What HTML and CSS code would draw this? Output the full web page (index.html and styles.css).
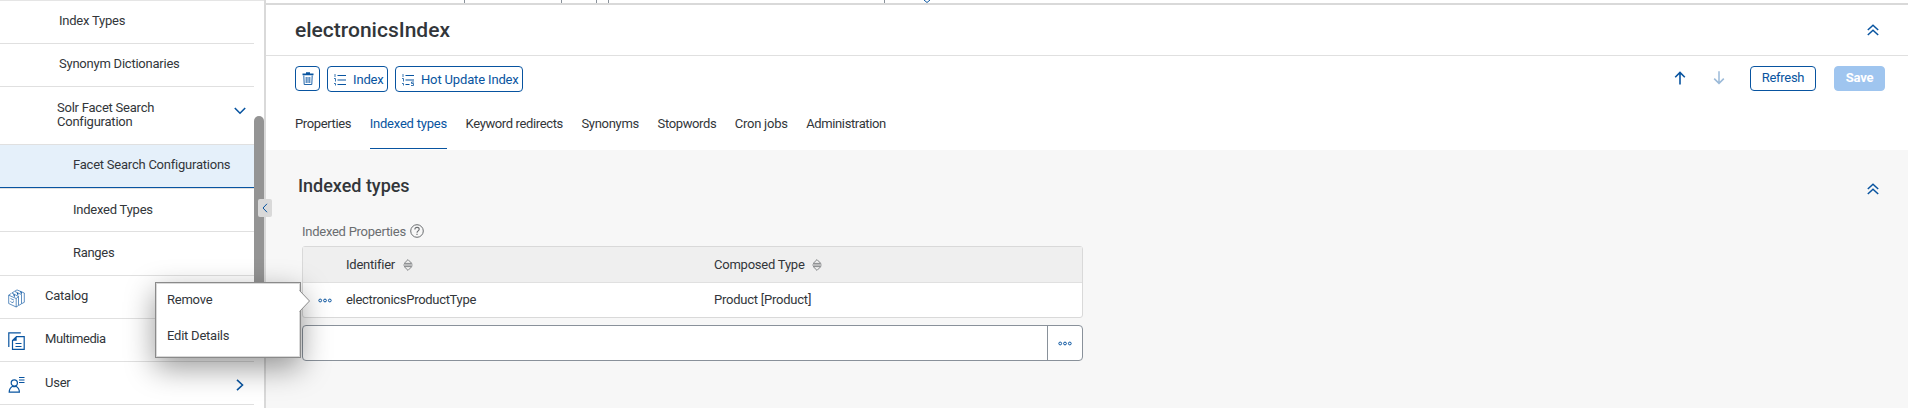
FILE: index.html
```html
<!DOCTYPE html>
<html lang="en">
<head>
<meta charset="utf-8">
<title>electronicsIndex</title>
<link rel="stylesheet" href="styles.css">
</head>
<body>
<svg class="defs" width="0" height="0">
  <symbol id="double-up" viewBox="0 0 12 12"><path d="M.8 6 6 1.2 11.2 6M.8 11 6 6.2 11.2 11" fill="none" stroke="currentColor" stroke-width="1.5"/></symbol>
  <symbol id="sort" viewBox="0 0 10 12"><path d="M1.200 4.400 5 .6 8.800 4.400ZM.300 6h9.400M1.200 7.600 5 11.400 8.800 7.600Z" fill="none" stroke="currentColor" stroke-width=".8"/></symbol>
  <symbol id="dots" viewBox="0 0 14 5"><g fill="none" stroke="currentColor" stroke-width="1"><circle cx="2.200" cy="2.500" r="1.400"/><circle cx="7" cy="2.500" r="1.400"/><circle cx="11.800" cy="2.500" r="1.400"/></g></symbol>
</svg>
<div class="app">
  <nav class="sidebar">
    <div class="nav-row sub"><span>Index Types</span></div>
    <div class="nav-row sub"><span>Synonym Dictionaries</span></div>
    <div class="nav-row group"><span>Solr Facet Search<br>Configuration</span>
      <svg class="chev-down" width="12" height="8" viewBox="0 0 12 8"><path d="M.8 1 6 6.2 11.2 1" fill="none" stroke="currentColor" stroke-width="1.6"/></svg></div>
    <div class="nav-row leaf selected"><span>Facet Search Configurations</span></div>
    <div class="nav-row leaf types"><span>Indexed Types</span></div>
    <div class="nav-row leaf ranges"><span>Ranges</span></div>
    <div class="nav-row top"><svg class="nav-icon" width="18" height="19" viewBox="0 0 18 19"><g fill="none" stroke="currentColor" stroke-width=".65"><path d="M.7 6.200 8.200 9.500V18L.7 14.500ZM.7 6.200 3.500 4.200M10.500 7.500 8.200 9.500M8.200 18l2.300-1.500V7.500L4 4 6.500 2.300 13.500 5.600V14.800L11 16.300M7 2.100 9 .9 16.300 4V13.300L13.800 14.600M2.500 9.500l3.500 1.600M2.500 12.200 4 13.800 6 12.500"/></g><path d="M5.200 5l1.600.8v2.500l-1.200-1.500ZM8.700 3.400l1.600.8v2.500L9.100 5.200ZM12.200 2.100l1.600.8v2.500l-1.200-1.500Z" fill="currentColor"/></svg><span>Catalog</span></div>
    <div class="nav-row top media"><svg class="nav-icon" width="18" height="19" viewBox="0 0 18 19"><path d="M.8 15V.8h12M8.500 4.600H16.200V17.400H4.500V8.600ZM7.500 11.500h6M7.500 14.500h6" fill="none" stroke="currentColor" stroke-width="1.200"/><path d="M4.500 8.800 8.700 4.600V8.800Z" fill="currentColor"/></svg><span>Multimedia</span></div>
    <div class="nav-row top user"><svg class="nav-icon" width="18" height="19" viewBox="0 0 18 19"><g fill="none" stroke="currentColor" stroke-width="1.200"><circle cx="6.300" cy="8" r="3.100"/><path d="M1.200 17.200C1.200 13.500 2.800 12.200 4.600 11.200Q6.300 12.200 8 11.200C9.800 12.200 11.400 13.500 11.400 17.200ZM11 2.500H16.500M11 5H16.500M11 7.500H16.500"/></g></svg><span>User</span>
      <svg class="chev-right" width="8" height="12" viewBox="0 0 8 12"><path d="M1 .8 6.500 6 1 11.200" fill="none" stroke="currentColor" stroke-width="1.600"/></svg></div>
    <div class="scrollbar"></div>
  </nav>
  <div class="splitter"><div class="collapse"><svg width="6" height="10" viewBox="0 0 6 10"><path d="M5 .8 1 5l4 4.200" fill="none" stroke="currentColor"/></svg></div></div>
  <main class="content">
    <div class="list-edge"><i></i><i></i><i></i><i></i><i></i><svg width="8" height="3" viewBox="0 0 8 3"><path d="M1 0 4 2.500 7 0" fill="none" stroke="currentColor"/></svg></div>
    <header class="title-bar"><h1>electronicsIndex</h1><svg width="12" height="12"><use href="#double-up"/></svg></header>
    <div class="toolbar">
      <button class="btn trash" aria-label="Delete"><svg width="12" height="14" viewBox="0 0 12 14"><path d="M.500 1.500h3.500V.3h4v1.200h3.500v1.700H.500Z" fill="currentColor"/><path d="M1.800 3.500 2.200 12.500h7.600l.4-9M4.200 5v6M6 5v6M7.800 5v6" fill="none" stroke="currentColor" stroke-width=".9"/></svg></button>
      <button class="btn index"><svg width="13" height="12" viewBox="0 0 13 12"><path d="M3.500 1.500H12M3.500 6H12M3.500 10.500H12" fill="none" stroke="currentColor" stroke-width="1.100"/><path d="M1 0v3M0 4.500h1.500V7.500M0 9.500h1.500v2" fill="none" stroke="currentColor" stroke-width=".8"/></svg><span>Index</span></button>
      <button class="btn hot"><svg width="13" height="12" viewBox="0 0 13 12"><path d="M3.500 1.500H12M3.500 6H12M3.500 10.500H7.500" fill="none" stroke="currentColor" stroke-width="1.100"/><path d="M1 0v3M0 4.500h1.500V7.500M0 9.500h1.500v2M12 8H9.500v1.500h2v2H9" fill="none" stroke="currentColor" stroke-width=".8"/></svg><span>Hot Update Index</span></button>
      <div class="actions">
        <svg class="arrow" width="12" height="14" viewBox="0 0 12 14"><path d="M6 13.500V1.500M1.200 6.200 6 1.400l4.800 4.800" fill="none" stroke="currentColor" stroke-width="1.600"/></svg>
        <svg class="arrow dim" width="12" height="14" viewBox="0 0 12 14"><path d="M6 .3V12.300M1.200 7.600 6 12.400l4.800-4.800" fill="none" stroke="currentColor" stroke-width="1.500"/></svg>
        <button class="btn refresh"><span>Refresh</span></button>
        <button class="btn save"><span>Save</span></button>
      </div>
    </div>
    <div class="tabs">
      <span>Properties</span><span class="active">Indexed types</span><span>Keyword redirects</span><span>Synonyms</span><span>Stopwords</span><span>Cron jobs</span><span>Administration</span>
    </div>
    <section class="panel">
      <div class="panel-head"><h2>Indexed types</h2><svg width="12" height="12"><use href="#double-up"/></svg></div>
      <div class="label"><span>Indexed Properties</span><svg width="14" height="14" viewBox="0 0 14 14"><circle cx="7" cy="7" r="6.300" fill="none" stroke="currentColor"/><path d="M4.900 5.500c0-2.900 4.300-2.700 4.300-.2 0 1.700-2.200 1.500-2.200 3.400M7 9.700v1.300" fill="none" stroke="currentColor" stroke-width="1.100"/></svg></div>
      <div class="table">
        <div class="tr th"><div class="cell first"><span>Identifier</span><svg width="10" height="12"><use href="#sort"/></svg></div><div class="cell"><span>Composed Type</span><svg width="10" height="12"><use href="#sort"/></svg></div></div>
        <div class="tr"><div class="cell first"><svg class="row-dots" width="14" height="5"><use href="#dots"/></svg><span class="code">electronicsProductType</span></div><div class="cell"><span>Product [Product]</span></div></div>
      </div>
      <div class="reference"><div class="field"></div><div class="pick"><svg width="14" height="5"><use href="#dots"/></svg></div></div>
    </section>
  </main>
  <div class="menu">
    <div><span>Remove</span></div><div><span>Edit Details</span></div>
    <svg class="tip" width="12" height="22" viewBox="0 0 12 22"><path d="M0 0 10.500 11 0 22Z" fill="#fff"/><path d="M.5 .5 10.500 11 .5 21.500" fill="none" stroke="#8a8a8a"/></svg>
  </div>
</div>
</body>
</html>
```
FILE: styles.css
```css
* { box-sizing: border-box; }
body { margin: 0; font: 13px/14px Roboto, "Liberation Sans", sans-serif; letter-spacing: -.23px; color: #32363a; background: #fff; }
h1, h2 { margin: 0; font-weight: 500; letter-spacing: 0; }
span { white-space: nowrap; }
svg { display: block; flex: none; color: #0854a0; }
.defs { position: absolute; }
.app { position: relative; display: flex; width: 1908px; height: 408px; overflow: hidden; }

.sidebar { position: relative; width: 264px; padding-right: 10px; border-top: 1px solid #e5e5e5; }
.nav-row { display: flex; align-items: center; height: 43px; border-bottom: 1px solid #e0e0e0; padding: 0 18px 3px 0; }
.sub { padding-left: 59px; }
.group { height: 58px; padding: 0 8px 2px 57px; justify-content: space-between; }
.group .chev-down { margin-top: -7px; }
.leaf { padding-left: 73px; }
.selected { height: 44px; background: #e5f0fa; box-shadow: inset 0 -1px #0854a0; }
.types { padding-bottom: 1px; }
.ranges { height: 44px; padding-bottom: 2px; letter-spacing: -.3px; }
.top { padding-right: 10px; }
.top .nav-icon { margin: 5px 19px 0 8px; }
.top .chev-right { margin: 6px 0 0 auto; }
.media { letter-spacing: -.42px; }
.user span { padding-top: 2px; }
.scrollbar { position: absolute; right: 0; top: 115px; width: 10px; height: 210px; border-radius: 5px; background: #949494; }
.splitter { position: relative; width: 2px; background: #d9d9d9; }
.collapse { position: absolute; left: -6px; top: 199px; width: 14px; height: 18px; background: #d9d9d9; border-radius: 2px; display: flex; align-items: center; justify-content: center; }

.content { flex: 1; display: flex; flex-direction: column; }
.list-edge { display: flex; height: 5px; border-bottom: 2px solid #d9d9d9; padding-left: 198px; }
.list-edge i { width: 1px; background: #89919a; }
.list-edge i:nth-child(2) { margin-left: 96px; }
.list-edge i:nth-child(3) { margin-left: 34px; }
.list-edge i:nth-child(4) { margin-left: 11px; }
.list-edge i:nth-child(5) { margin-left: 275px; }
.list-edge svg { margin-left: 38px; }
.title-bar { height: 51px; border-bottom: 1px solid #e0e0e0; display: flex; align-items: center; justify-content: space-between; padding: 0 29.500px 0 29px; }
h1 { font-size: 21px; line-height: 26px; }
.toolbar { display: flex; align-items: flex-start; padding: 10px 23px 0 29px; height: 46px; }
.btn { display: flex; align-items: center; height: 26px; border: 1px solid #0854a0; border-radius: 4px; background: #fff; color: #0854a0; font: inherit; letter-spacing: -.28px; padding: 0; }
.trash { width: 25px; height: 25px; justify-content: center; margin-right: 7px; }
.index { width: 61px; margin-right: 7px; }
.hot { width: 128px; }
.index, .hot { letter-spacing: -.15px; }
.index svg, .hot svg { margin: 2px 6px 0 6px; }
.index span, .hot span { padding-top: 2px; }
.actions { margin-left: auto; display: flex; }
.arrow { margin: 5px 27px 0 0; }
.arrow.dim { opacity: .4; margin-right: 25px; }
.refresh { width: 66px; height: 25px; justify-content: center; margin-right: 18px; padding-bottom: 1px; }
.save { width: 51px; height: 25px; justify-content: center; background: #9fc5ef; border-color: #9fc5ef; color: #fff; font-weight: 700; padding-bottom: 1px; }
.tabs { display: flex; gap: 18.500px; height: 48px; padding-left: 29px; letter-spacing: -.37px; }
.tabs span { height: 47px; padding-top: 15px; }
.tabs .active { color: #0854a0; border-bottom: 1px solid #0854a0; letter-spacing: -.2px; }
.tabs span:nth-child(4) { letter-spacing: -.28px; }
.tabs span:nth-child(6) { letter-spacing: -.25px; }

.panel { flex: 1; background: #f7f7f7; padding: 24px 29.500px 0 36px; }
.panel-head { display: flex; justify-content: space-between; align-items: center; }
h2 { font-size: 18px; line-height: 24px; margin-left: -4px; letter-spacing: -.02px; }
.panel-head svg { margin-top: 6px; }
.label { display: flex; gap: 4px; align-items: center; color: #6a6d70; height: 14px; margin: 26px 0 8px; }
.label svg, .th svg { color: #6a6d70; }
.label span { padding-top: 1px; letter-spacing: -.26px; }
.table { width: 781px; border: 1px solid #d9d9d9; border-radius: 3px; background: #fff; }
.tr { display: flex; align-items: center; height: 34px; }
.th { height: 36px; background: #efefef; border-bottom: 1px solid #e0e0e0; }
.cell { display: flex; align-items: center; gap: 7.500px; }
.cell.first { width: 411px; padding-left: 43px; }
.code { letter-spacing: -.3px; }
.row-dots { margin-left: -28.500px; margin-right: 7px; }
.reference { display: flex; width: 781px; height: 36px; margin-top: 7px; border: 1px solid #89919a; border-radius: 4px; background: #fff; }
.field { flex: 1; }
.pick { width: 35px; border-left: 1px solid #89919a; display: flex; align-items: center; justify-content: center; padding-right: 1px; }

.menu { position: absolute; left: 155px; top: 282px; width: 146px; height: 76px; background: #fff; border: 1px solid #8a8a8a; box-shadow: inset 0 0 0 1px #d9d9d9, 0 10px 30px rgba(0,0,0,.4); padding: 0 0 0 11px; }
.menu div { height: 36px; display: flex; align-items: center; padding-bottom: 2px; }
.tip { position: absolute; left: 143px; top: 7px; }
```
